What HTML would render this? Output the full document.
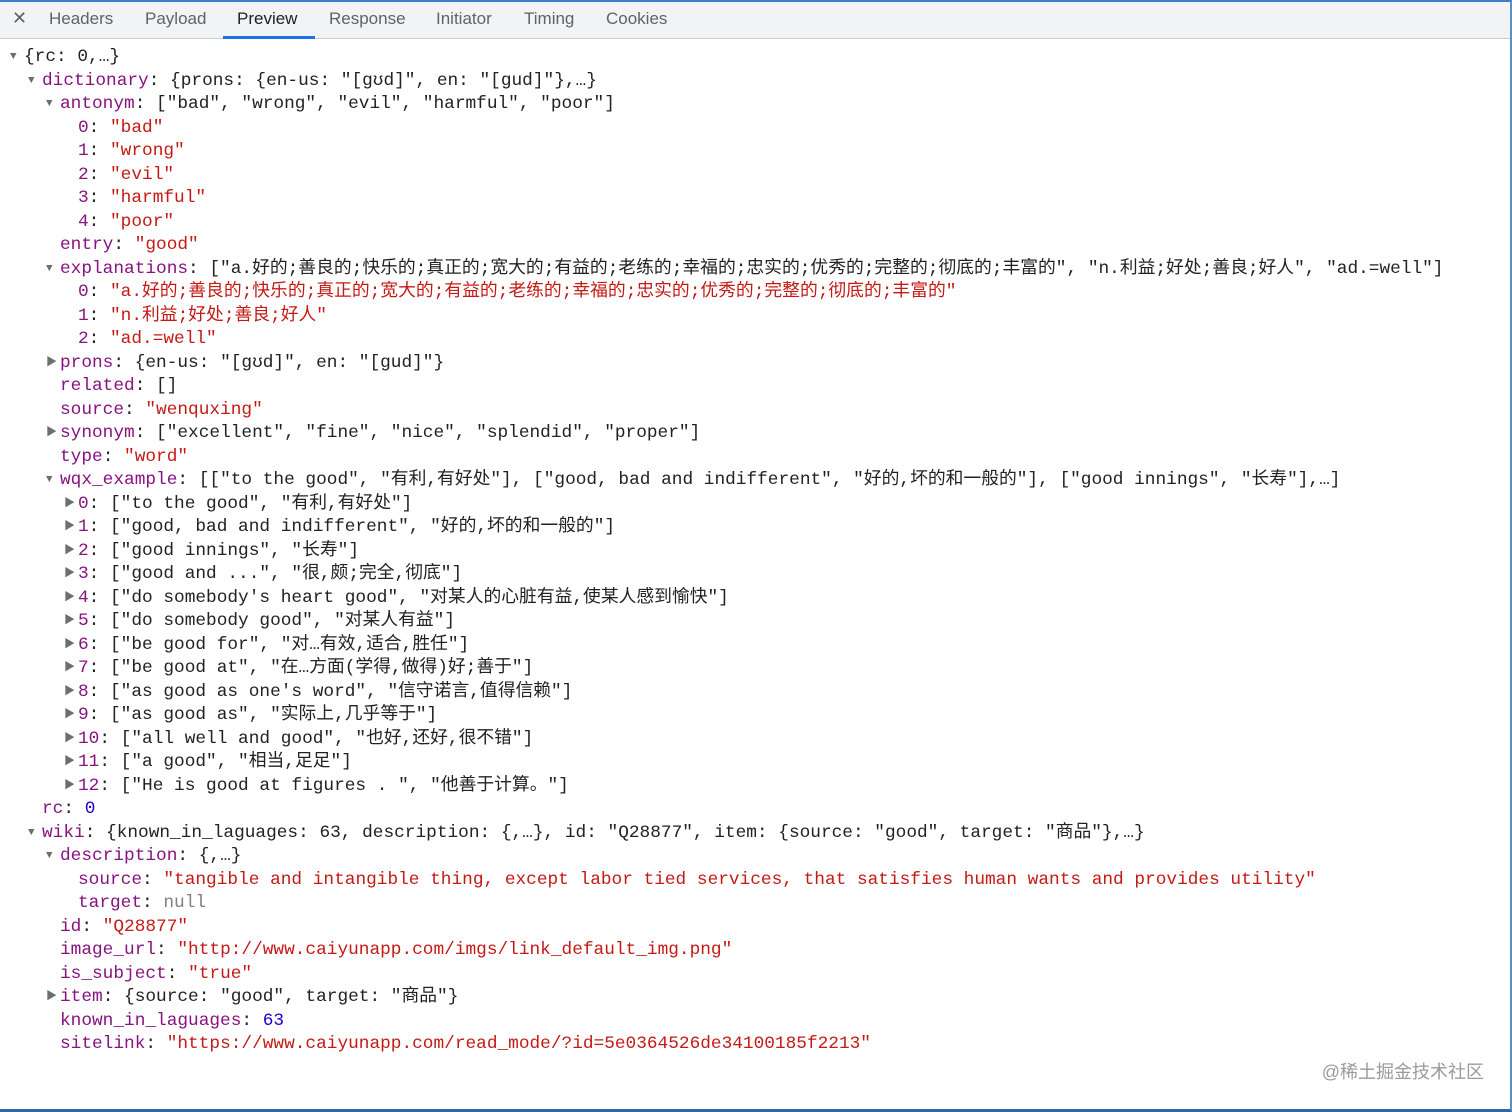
<!DOCTYPE html>
<html><head><meta charset="utf-8"><style>
body{margin:0;width:1512px;height:1112px;overflow:hidden;background:#fff;position:relative;font-family:"Liberation Mono","Noto Sans CJK SC",monospace;}
.frame{position:absolute;left:0;top:0;width:1510px;height:1107px;border-top:2px solid #3b7fc4;border-right:2px solid #5a8fc0;border-bottom:3px solid #2a6aa8;}
.tabs{position:absolute;left:0;top:2px;width:1510px;height:36px;background:#f1f3f4;border-bottom:1px solid #cbcdd1;font-family:"Liberation Sans",sans-serif;font-size:17px;color:#5f6368;}
.tabs span{position:absolute;top:7px}
.ul{position:absolute;left:223px;top:34px;width:92px;height:3px;background:#1a73e8}
.tree{position:absolute;left:0;top:46px;font-size:17.8px;line-height:23.5px;color:#222}
.r{position:relative;height:23.5px;white-space:pre}
.k{color:#881280}.s{color:#c41a16}.n{color:#1c00cf}.g{color:#808080}
.t{position:absolute;top:0;color:#6e6e6e;font-size:11px}
.wm{position:absolute;right:28px;bottom:28px;font-family:"Liberation Sans","Noto Sans CJK SC",sans-serif;font-size:18px;color:#9a9a9a}
</style></head><body>
<div class="frame"></div>
<div class="tabs"><span style="left:12px;font-size:18px;top:6px">✕</span><span style="left:49px">Headers</span><span style="left:145px">Payload</span><span style="left:237px;color:#202124">Preview</span><span style="left:329px">Response</span><span style="left:436px">Initiator</span><span style="left:524px">Timing</span><span style="left:606px">Cookies</span><div class="ul"></div></div>
<div class="tree"><div class="r" style="padding-left:24px"><span class="t" style="left:10px">▼</span>{rc: 0,…}</div><div class="r" style="padding-left:42px"><span class="t" style="left:28px">▼</span><span class="k">dictionary</span>: {prons: {en-us: "[gʊd]", en: "[gud]"},…}</div><div class="r" style="padding-left:60px"><span class="t" style="left:46px">▼</span><span class="k">antonym</span>: ["bad", "wrong", "evil", "harmful", "poor"]</div><div class="r" style="padding-left:78px"><span class="k">0</span>: <span class="s">"bad"</span></div><div class="r" style="padding-left:78px"><span class="k">1</span>: <span class="s">"wrong"</span></div><div class="r" style="padding-left:78px"><span class="k">2</span>: <span class="s">"evil"</span></div><div class="r" style="padding-left:78px"><span class="k">3</span>: <span class="s">"harmful"</span></div><div class="r" style="padding-left:78px"><span class="k">4</span>: <span class="s">"poor"</span></div><div class="r" style="padding-left:60px"><span class="k">entry</span>: <span class="s">"good"</span></div><div class="r" style="padding-left:60px"><span class="t" style="left:46px">▼</span><span class="k">explanations</span>: ["a.好的;善良的;快乐的;真正的;宽大的;有益的;老练的;幸福的;忠实的;优秀的;完整的;彻底的;丰富的", "n.利益;好处;善良;好人", "ad.=well"]</div><div class="r" style="padding-left:78px"><span class="k">0</span>: <span class="s">"a.好的;善良的;快乐的;真正的;宽大的;有益的;老练的;幸福的;忠实的;优秀的;完整的;彻底的;丰富的"</span></div><div class="r" style="padding-left:78px"><span class="k">1</span>: <span class="s">"n.利益;好处;善良;好人"</span></div><div class="r" style="padding-left:78px"><span class="k">2</span>: <span class="s">"ad.=well"</span></div><div class="r" style="padding-left:60px"><span class="t" style="left:46px">▶</span><span class="k">prons</span>: {en-us: "[gʊd]", en: "[gud]"}</div><div class="r" style="padding-left:60px"><span class="k">related</span>: []</div><div class="r" style="padding-left:60px"><span class="k">source</span>: <span class="s">"wenquxing"</span></div><div class="r" style="padding-left:60px"><span class="t" style="left:46px">▶</span><span class="k">synonym</span>: ["excellent", "fine", "nice", "splendid", "proper"]</div><div class="r" style="padding-left:60px"><span class="k">type</span>: <span class="s">"word"</span></div><div class="r" style="padding-left:60px"><span class="t" style="left:46px">▼</span><span class="k">wqx_example</span>: [["to the good", "有利,有好处"], ["good, bad and indifferent", "好的,坏的和一般的"], ["good innings", "长寿"],…]</div><div class="r" style="padding-left:78px"><span class="t" style="left:64px">▶</span><span class="k">0</span>: ["to the good", "有利,有好处"]</div><div class="r" style="padding-left:78px"><span class="t" style="left:64px">▶</span><span class="k">1</span>: ["good, bad and indifferent", "好的,坏的和一般的"]</div><div class="r" style="padding-left:78px"><span class="t" style="left:64px">▶</span><span class="k">2</span>: ["good innings", "长寿"]</div><div class="r" style="padding-left:78px"><span class="t" style="left:64px">▶</span><span class="k">3</span>: ["good and ...", "很,颇;完全,彻底"]</div><div class="r" style="padding-left:78px"><span class="t" style="left:64px">▶</span><span class="k">4</span>: ["do somebody's heart good", "对某人的心脏有益,使某人感到愉快"]</div><div class="r" style="padding-left:78px"><span class="t" style="left:64px">▶</span><span class="k">5</span>: ["do somebody good", "对某人有益"]</div><div class="r" style="padding-left:78px"><span class="t" style="left:64px">▶</span><span class="k">6</span>: ["be good for", "对…有效,适合,胜任"]</div><div class="r" style="padding-left:78px"><span class="t" style="left:64px">▶</span><span class="k">7</span>: ["be good at", "在…方面(学得,做得)好;善于"]</div><div class="r" style="padding-left:78px"><span class="t" style="left:64px">▶</span><span class="k">8</span>: ["as good as one's word", "信守诺言,值得信赖"]</div><div class="r" style="padding-left:78px"><span class="t" style="left:64px">▶</span><span class="k">9</span>: ["as good as", "实际上,几乎等于"]</div><div class="r" style="padding-left:78px"><span class="t" style="left:64px">▶</span><span class="k">10</span>: ["all well and good", "也好,还好,很不错"]</div><div class="r" style="padding-left:78px"><span class="t" style="left:64px">▶</span><span class="k">11</span>: ["a good", "相当,足足"]</div><div class="r" style="padding-left:78px"><span class="t" style="left:64px">▶</span><span class="k">12</span>: ["He is good at figures . ", "他善于计算。"]</div><div class="r" style="padding-left:42px"><span class="k">rc</span>: <span class="n">0</span></div><div class="r" style="padding-left:42px"><span class="t" style="left:28px">▼</span><span class="k">wiki</span>: {known_in_laguages: 63, description: {,…}, id: "Q28877", item: {source: "good", target: "商品"},…}</div><div class="r" style="padding-left:60px"><span class="t" style="left:46px">▼</span><span class="k">description</span>: {,…}</div><div class="r" style="padding-left:78px"><span class="k">source</span>: <span class="s">"tangible and intangible thing, except labor tied services, that satisfies human wants and provides utility"</span></div><div class="r" style="padding-left:78px"><span class="k">target</span>: <span class="g">null</span></div><div class="r" style="padding-left:60px"><span class="k">id</span>: <span class="s">"Q28877"</span></div><div class="r" style="padding-left:60px"><span class="k">image_url</span>: <span class="s">"http://www.caiyunapp.com/imgs/link_default_img.png"</span></div><div class="r" style="padding-left:60px"><span class="k">is_subject</span>: <span class="s">"true"</span></div><div class="r" style="padding-left:60px"><span class="t" style="left:46px">▶</span><span class="k">item</span>: {source: "good", target: "商品"}</div><div class="r" style="padding-left:60px"><span class="k">known_in_laguages</span>: <span class="n">63</span></div><div class="r" style="padding-left:60px"><span class="k">sitelink</span>: <span class="s">"https://www.caiyunapp.com/read_mode/?id=5e0364526de34100185f2213"</span></div></div>
<div class="wm">@稀土掘金技术社区</div>
</body></html>
